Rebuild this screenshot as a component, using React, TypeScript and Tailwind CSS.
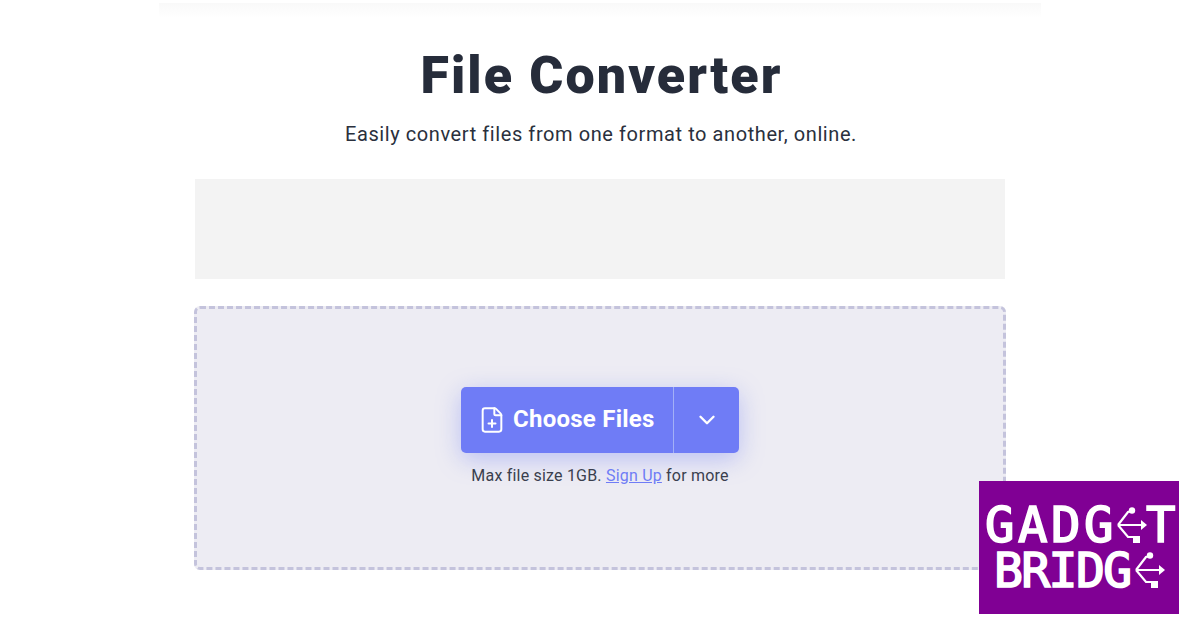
import { ChevronDown, FilePlus } from 'lucide-react';

function UsbMark() {
  return (
    <svg viewBox="0 0 30 36" className="h-[36px] w-[30px] shrink-0" fill="none" stroke="#fff" strokeWidth="2.2">
      <path d="M1 18 L11 5 L15 4 M1 18 L27 18 M1 18 L11 30 L19 30 L19 33" />
      <circle cx="15" cy="3.5" r="3.2" fill="#fff" stroke="none" />
      <path d="M24 13 L30 18 L24 23 Z" fill="#fff" stroke="none" />
      <rect x="16" y="29" width="7" height="7" fill="#fff" stroke="none" />
    </svg>
  );
}

function Logo() {
  return (
    <div className="absolute left-[979px] top-[481px] h-[133px] w-[200px] bg-[#800094] pt-[26px] font-['DejaVu_Sans_Mono','monospace'] text-white [-webkit-text-stroke:1.7px_white]">
      <div className="ml-[6px] flex h-[36px] items-center text-[49px] leading-none">
        <span className="w-[132px] tracking-[3.5px] whitespace-nowrap">GADG</span>
        <UsbMark />
        <span className="ml-[-1px] w-[26px]">T</span>
      </div>
      <div className="ml-[15px] mt-[9px] flex h-[36px] items-center text-[48px] leading-none">
        <span className="w-[141px] tracking-[-1.6px] whitespace-nowrap">BRIDG</span>
        <UsbMark />
      </div>
    </div>
  );
}

export default function App() {
  return (
    <div className="relative h-[628px] w-[1200px] overflow-hidden bg-white font-['Roboto','sans-serif'] text-[#2a303d]">
      <div className="mx-auto mt-[3px] h-[15px] w-[882px] bg-gradient-to-b from-[#f9f9f9] to-white" />

      <h1 className="mt-[22px] pl-[3px] text-center text-[52px] leading-[72px] font-black tracking-[2.1px] text-[#262c3a]">
        File Converter
      </h1>
      <p className="mt-[8px] pl-[2px] text-center text-[20px] leading-[28px] tracking-[0.58px] text-[#2a303d]">
        Easily convert files from one format to another, online.
      </p>

      <div className="mx-auto mt-[31px] h-[100px] w-[810px] bg-[#f3f3f3]" />

      <div className="mx-auto mt-[27px] flex h-[264px] w-[812px] flex-col items-center rounded-[6px] border-[3px] border-dashed border-[#c4c3dc] bg-[#edecf3] pt-[78px]">
        <div className="flex h-[66px] w-[278px] rounded-[5px] bg-[#6f7cf6] text-white shadow-[0_6px_24px_rgba(111,124,246,0.4)]">
          <div className="flex w-[212px] items-center gap-[7px] pl-[17px]">
            <FilePlus className="h-[28px] w-[28px]" strokeWidth={1.7} />
            <span className="mb-[3px] text-[24px] font-bold tracking-[0.25px] whitespace-nowrap">Choose Files</span>
          </div>
          <div className="flex flex-1 items-center justify-center border-l border-[#a3b0f7]">
            <ChevronDown className="h-[26px] w-[26px]" strokeWidth={2.2} />
          </div>
        </div>
        <p className="mt-[11px] text-[16px] leading-[24px] tracking-[0.2px] text-[#3a3f4e]">
          Max file size 1GB. <a className="text-[#6f7cf6] underline">Sign Up</a> for more
        </p>
      </div>

      <Logo />
    </div>
  );
}
